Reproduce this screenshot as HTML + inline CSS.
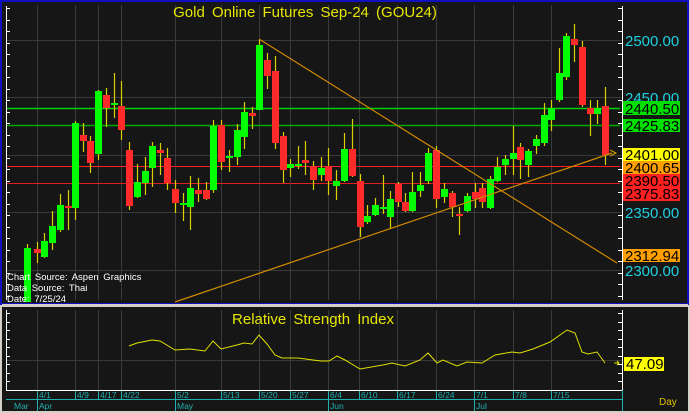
<!DOCTYPE html>
<html><head><meta charset="utf-8"><style>
html,body{margin:0;padding:0;background:#d4d0c8;}
body{width:690px;height:413px;overflow:hidden;position:relative;font-family:"Liberation Sans",sans-serif;}
svg{position:absolute;left:0;top:0;}
</style></head><body>
<svg id="s" width="690" height="413" xmlns="http://www.w3.org/2000/svg" font-family="Liberation Sans, sans-serif">
<rect x="0" y="0" width="690" height="413" fill="#d4d0c8"/>
<rect x="1" y="1" width="687" height="303" fill="#161616" stroke="#1010c0" stroke-width="2"/>
<rect x="2" y="307" width="686" height="104" fill="#161616"/>
<g id="grid" stroke="#3a3a3a" stroke-width="1"></g>
<line x1="6.5" y1="6" x2="6.5" y2="300" stroke="#fff"/>
<line x1="622.5" y1="6" x2="622.5" y2="300" stroke="#fff"/>
<line x1="6.5" y1="310" x2="6.5" y2="390" stroke="#fff"/>
<line x1="622.5" y1="310" x2="622.5" y2="390" stroke="#fff"/>
<g id="ticks" stroke="#fff"></g>
<text x="305" y="17" fill="#e6e600" font-size="15" text-anchor="middle" word-spacing="3">Gold Online Futures Sep-24 (GOU24)</text>
<line x1="7" y1="108.5" x2="620" y2="108.5" stroke="#00d000" stroke-width="1.5"/>
<line x1="7" y1="125.5" x2="620" y2="125.5" stroke="#00a800" stroke-width="1.5"/>
<line x1="7" y1="166.5" x2="620" y2="166.5" stroke="#ff2020" stroke-width="1"/>
<line x1="7" y1="183.5" x2="620" y2="183.5" stroke="#e02020" stroke-width="1"/>
<g id="c"></g>
<line x1="259" y1="39" x2="617" y2="263" stroke="#d08a00" stroke-width="1.2"/>
<line x1="175" y1="302" x2="612" y2="153" stroke="#d08a00" stroke-width="1.2"/>
<path d="M610 150 L616 153 L610 156" stroke="#e0a000" fill="none"/>
<g font-size="15">
<text x="625" y="46" fill="#20d0e0">2500.00</text>
<text x="625" y="103" fill="#20d0e0">2450.00</text>
<text x="625" y="218" fill="#20d0e0">2350.00</text>
<text x="625" y="276" fill="#20d0e0">2300.00</text>
<rect x="623" y="101" width="57" height="14" fill="#00e000"/><text x="625" y="114" fill="#000">2440.50</text>
<rect x="623" y="119" width="57" height="13" fill="#00e000"/><text x="625" y="131" fill="#000">2425.83</text>
<rect x="623" y="148" width="57" height="13" fill="#ffff00"/><text x="625" y="160" fill="#000">2401.00</text>
<rect x="623" y="161" width="57" height="13" fill="#ffa000"/><text x="625" y="173" fill="#000">2400.65</text>
<rect x="623" y="174" width="57" height="27" fill="#ff2020"/><text x="625" y="186" fill="#000">2390.50</text><text x="625" y="199" fill="#000">2375.83</text>
<rect x="623" y="249" width="57" height="13" fill="#ffa000"/><text x="625" y="261" fill="#000">2312.94</text>
</g>
<g font-size="9.5" fill="#fff" word-spacing="2">
<text x="7" y="280">Chart Source: Aspen Graphics</text>
<text x="7" y="291">Data Source: Thai</text>
<text x="7" y="302">Date: 7/25/24</text>
</g>
<rect x="2" y="304" width="686" height="3" fill="#d4d0c8"/>
<text x="313" y="324" fill="#e6e600" font-size="15" text-anchor="middle" word-spacing="3">Relative Strength Index</text>
<polyline fill="none" stroke="#e0e000" stroke-width="1" points="129,346 137,343 152,340 160,341 175,350 190,349 205,351 213,341 221,349 237,345 244,343 252,344 259,335 267,344 275,355 282,358 298,358 313,360 321,361 329,361 337,356 345,360 360,369 383,365 392,363 405,366 420,360 428,353 437,363 443,360 457,366 467,362 482,363 495,355 512,352 520,353 533,349 550,342 567,330 575,333 582,352 588,354 597,352 605,363"/>
<path d="M614 363 H619 M617 361 L619 363 L617 365" stroke="#e0e000" fill="none"/>
<rect x="624" y="357" width="40" height="14" fill="#ffff00"/><text x="626" y="369" fill="#000" font-size="15">47.09</text>
<line x1="6" y1="390.5" x2="622" y2="390.5" stroke="#fff"/>
<line x1="6" y1="399.5" x2="622" y2="399.5" stroke="#20b0b0"/>
<line x1="622.5" y1="390" x2="622.5" y2="411" stroke="#20b0b0"/>
<g id="dates" font-size="8.5" fill="#20b0b0"></g>
<text x="659" y="405" fill="#e0c000" font-size="10">Day</text>
</svg>
<script>
var NS="http://www.w3.org/2000/svg";
function el(p,t,a,txt){var e=document.createElementNS(NS,t);for(var k in a)e.setAttribute(k,a[k]);if(txt)e.textContent=txt;document.getElementById(p).appendChild(e);return e;}
var vx=[37,75,98,121,175,221,259,290,328,359,397,436,474,513,551];
vx.forEach(function(x){el("grid","line",{x1:x+.5,y1:5,x2:x+.5,y2:300});el("grid","line",{x1:x+.5,y1:310,x2:x+.5,y2:390});});
[40,97,155,212,270].forEach(function(y){el("grid","line",{x1:7,y1:y+.5,x2:621,y2:y+.5});});
el("grid","line",{x1:7,y1:360.5,x2:621,y2:360.5});
for(var y=8;y<300;y+=11.5){el("ticks","line",{x1:7,y1:Math.round(y)+.5,x2:10,y2:Math.round(y)+.5});el("ticks","line",{x1:618,y1:Math.round(y)+.5,x2:622,y2:Math.round(y)+.5});}
for(var y=313;y<390;y+=8.5){el("ticks","line",{x1:7,y1:Math.round(y)+.5,x2:10,y2:Math.round(y)+.5});el("ticks","line",{x1:618,y1:Math.round(y)+.5,x2:622,y2:Math.round(y)+.5});}
var dl=["4/1","4/9","4/17","4/22","5/2","5/13","5/20","5/27","6/4","6/10","6/17","6/24","7/1","7/8","7/15"];
vx.forEach(function(x,i){el("dates","line",{x1:x+.5,y1:391,x2:x+.5,y2:399,stroke:"#20b0b0"});el("dates","text",{x:x+2,y:398},dl[i]);});
[[14,"Mar"],[37,"Apr"],[175,"May"],[328,"Jun"],[474,"Jul"]].forEach(function(m){if(m[0]>20)el("dates","line",{x1:m[0]+.5,y1:391,x2:m[0]+.5,y2:411,stroke:"#20b0b0"});el("dates","text",{x:m[0]+(m[0]>20?2:0),y:409},m[1]);});
var G="#00ff00",R="#ff2a2a";
var C=[[27,248,302,244,302,G],[37,249,253,242,263,R],[44,241,257,233,258,G],[52,226,243,211,250,G],[60,205,230,194,232,G],[68,206,208,190,230,R],[75,123,208,121,220,G],[83,135,141,123,152,R],[90,141,163,136,173,R],[98,91,154,90,160,G],[106,95,108,88,127,R],[114,103,105,73,118,G],[121,106,130,81,140,R],[129,150,206,142,210,R],[137,182,197,164,198,G],[145,171,183,157,195,G],[152,146,168,142,187,G],[160,150,153,143,175,R],[167,158,183,148,190,R],[175,189,203,180,213,R],[183,203,205,193,221,G],[190,188,207,176,230,G],[198,190,194,178,202,R],[206,190,199,182,200,R],[213,126,190,120,193,G],[221,125,162,120,170,R],[229,156,158,150,172,G],[237,130,157,124,165,G],[244,112,137,102,149,G],[252,113,116,107,129,R],[259,45,110,39,110,G],[267,60,76,53,89,R],[275,71,143,56,149,R],[283,136,170,132,183,R],[290,164,168,159,177,G],[298,164,165,146,169,G],[305,160,163,141,175,R],[313,166,180,161,190,R],[321,168,175,157,181,G],[328,166,181,148,195,R],[336,181,186,170,200,G],[344,149,181,133,182,G],[352,149,176,119,177,R],[360,181,227,174,237,R],[367,216,222,205,224,G],[375,205,215,198,216,G],[383,207,209,175,214,G],[390,199,217,191,229,G],[398,184,202,182,207,R],[405,202,211,193,212,R],[412,192,211,172,212,G],[420,185,191,172,197,G],[428,153,181,148,184,G],[436,150,199,146,208,R],[444,189,197,183,203,G],[452,193,207,191,217,R],[459,214,216,207,235,R],[467,196,211,193,212,G],[475,192,199,183,208,R],[482,188,202,183,208,R],[490,179,208,176,209,G],[497,167,181,157,182,G],[505,159,165,155,175,G],[513,153,159,126,175,G],[520,147,160,143,179,R],[528,151,165,149,177,G],[536,139,146,135,154,G],[544,115,143,103,146,G],[551,108,120,100,131,G],[559,73,100,48,102,G],[566,36,77,33,80,G],[574,39,45,24,62,R],[582,47,105,41,107,R],[590,108,114,100,136,R],[597,108,114,100,124,G],[605,106,155,87,165,R]];
C.forEach(function(c){el("c","line",{x1:c[0]+.5,y1:c[3],x2:c[0]+.5,y2:c[4],stroke:"#d8d000","stroke-width":1.2});el("c","rect",{x:c[0]-3,y:c[1],width:7,height:Math.max(2,c[2]-c[1]),fill:c[5]});});
</script>
</body></html>
